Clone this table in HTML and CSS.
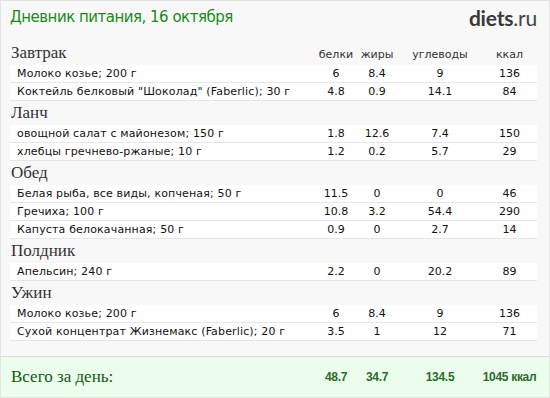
FILE: index.html
```
<!DOCTYPE html>
<html lang="ru">
<head>
<meta charset="utf-8">
<title>Дневник питания</title>
<link rel="stylesheet" href="styles.css">
</head>
<body>
<div class="page">
  <div class="top">
    <h1 class="title">Дневник питания, 16 октября</h1>
    <div class="logo"><b>diets</b>.ru</div>
  </div>
  <div class="meals">
    <div class="head"><span class="meal">Завтрак</span><span class="lbl">белки</span><span class="lbl">жиры</span><span class="lbl">углеводы</span><span class="lbl">ккал</span></div>
    <div class="row"><span class="name">Молоко козье; 200 г</span><span>6</span><span>8.4</span><span>9</span><span>136</span></div>
    <div class="row"><span class="name">Коктейль белковый "Шоколад" (Faberlic); 30 г</span><span>4.8</span><span>0.9</span><span>14.1</span><span>84</span></div>

    <div class="head"><span class="meal">Ланч</span></div>
    <div class="row"><span class="name">овощной салат с майонезом; 150 г</span><span>1.8</span><span>12.6</span><span>7.4</span><span>150</span></div>
    <div class="row"><span class="name">хлебцы гречнево-ржаные; 10 г</span><span>1.2</span><span>0.2</span><span>5.7</span><span>29</span></div>

    <div class="head"><span class="meal">Обед</span></div>
    <div class="row"><span class="name">Белая рыба, все виды, копченая; 50 г</span><span>11.5</span><span>0</span><span>0</span><span>46</span></div>
    <div class="row"><span class="name">Гречиха; 100 г</span><span>10.8</span><span>3.2</span><span>54.4</span><span>290</span></div>
    <div class="row"><span class="name">Капуста белокачанная; 50 г</span><span>0.9</span><span>0</span><span>2.7</span><span>14</span></div>

    <div class="head"><span class="meal">Полдник</span></div>
    <div class="row"><span class="name">Апельсин; 240 г</span><span>2.2</span><span>0</span><span>20.2</span><span>89</span></div>

    <div class="head"><span class="meal">Ужин</span></div>
    <div class="row"><span class="name">Молоко козье; 200 г</span><span>6</span><span>8.4</span><span>9</span><span>136</span></div>
    <div class="row"><span class="name">Сухой концентрат Жизнемакс (Faberlic); 20 г</span><span>3.5</span><span>1</span><span>12</span><span>71</span></div>
  </div>
  <div class="total">
    <span class="tlabel">Всего за день:</span><span>48.7</span><span>34.7</span><span>134.5</span><span>1045 ккал</span>
  </div>
</div>
</body>
</html>
```
FILE: styles.css
```
* { box-sizing: border-box; }
html, body { margin: 0; padding: 0; background: #fff; }
.page {
  width: 550px;
  height: 398px;
  border: 1px solid #e3e3e3;
  background: #f8f8f8;
  display: flex;
  flex-direction: column;
  overflow: hidden;
}
.top {
  height: 40px;
  display: flex;
  align-items: center;
  justify-content: space-between;
  padding: 0 12px 8px 9px;
}
.title {
  margin: 0;
  font-family: "DejaVu Sans", Verdana, sans-serif;
  font-weight: normal;
  font-size: 15px;
  color: #1a8a1a;
  letter-spacing: -0.5px;
}
.logo {
  font-family: Lato, "Open Sans", sans-serif;
  font-size: 21px;
  color: #444;
  letter-spacing: -0.2px;
}
.logo b { font-weight: 700; color: #3a3a3a; }
.meals {
  padding: 0 12px 0 9px;
  height: 315px;
}
.head, .row, .total {
  display: grid;
  grid-template-columns: 1fr 40px 42px 84px 55px;
  align-items: center;
  text-align: center;
}
.head {
  height: 24px;
  align-items: end;
  padding-bottom: 2px;
}
.meal {
  text-align: left;
  font-family: "Liberation Serif", "Times New Roman", serif;
  font-size: 17px;
  line-height: 20px;
  color: #333;
  padding-left: 1px;
}
.lbl {
  font-family: "DejaVu Sans", Verdana, sans-serif;
  font-size: 11px;
  line-height: 16px;
  color: #333;
}
.row {
  height: 18px;
  background: #fff;
  border-bottom: 1px solid #e6e6e6;
  font-family: "DejaVu Sans", Verdana, sans-serif;
  font-size: 11px;
  color: #111;
}
.row .name {
  text-align: left;
  padding-left: 7px;
  white-space: nowrap;
  letter-spacing: 0.15px;
}
.total {
  flex: 1;
  border-top: 1px solid #dcdcdc;
  background: #ebfdeb;
  padding: 0 12px 0 9px;
  font-family: "Liberation Sans", Arial, sans-serif;
  font-weight: bold;
  font-size: 12px;
  color: #2c6a2c;
  letter-spacing: -0.3px;
}
.tlabel {
  text-align: left;
  padding-left: 1px;
  font-family: "Liberation Serif", "Times New Roman", serif;
  font-weight: normal;
  font-size: 17px;
  color: #0f5a0f;
  letter-spacing: 0;
}
```
